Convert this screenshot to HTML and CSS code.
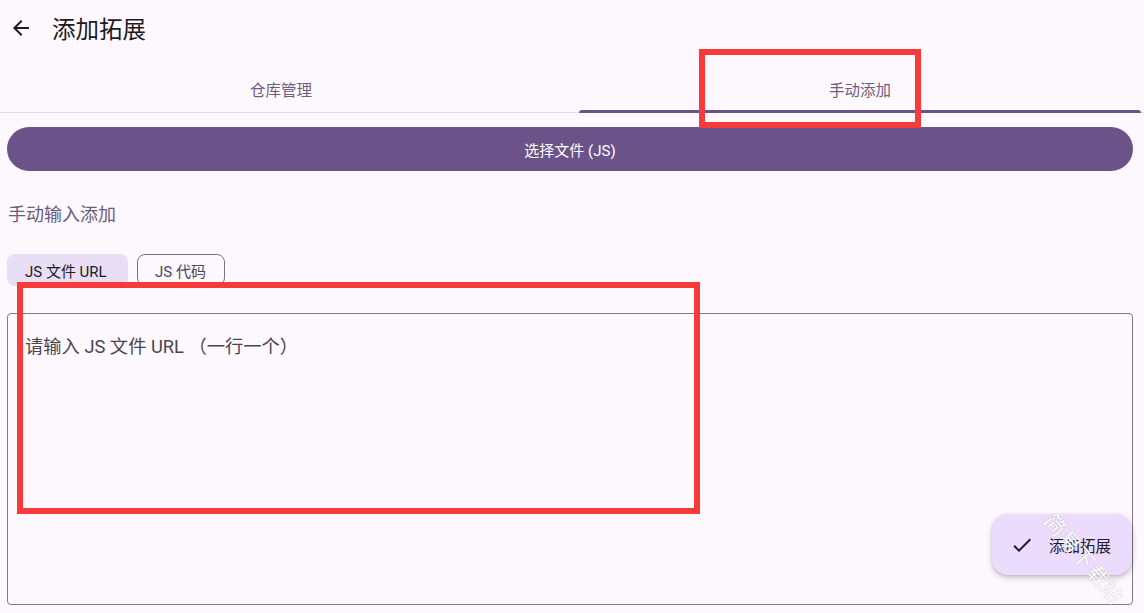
FILE: index.html
```html
<!DOCTYPE html>
<html lang="zh-CN">
<head>
    <meta charset="UTF-8">
    <meta name="viewport" content="width=device-width, initial-scale=1.0">
    <title>添加拓展</title>
    <link rel="stylesheet" href="styles.css">
</head>
<body>

    <!-- Top bar -->
    <div class="topbar">
        <svg class="back" width="24" height="24" viewBox="0 0 24 24">
            <path d="M20 11H7.83l5.59-5.59L12 4l-8 8 8 8 1.41-1.41L7.83 13H20v-2z" fill="#1d1b20"/>
        </svg>
        <h1>添加拓展</h1>
    </div>

    <!-- Tabs -->
    <div class="tabs">
        <div class="tab">仓库管理</div>
        <div class="tab active">手动添加</div>
    </div>

    <!-- Content -->
    <div class="content">
        <button class="pick">选择文件 (JS)</button>

        <div class="label">手动输入添加</div>

        <div class="chips">
            <span class="chip selected">JS 文件 URL</span>
            <span class="chip">JS 代码</span>
        </div>

        <div class="field">
            <span class="placeholder">请输入 JS 文件 URL （一行一个）</span>
        </div>
    </div>

    <!-- Floating action -->
    <div class="fab">
        <svg width="24" height="24" viewBox="0 0 24 24">
            <path d="M9 16.17L4.83 12l-1.42 1.41L9 19 21 7l-1.41-1.41z" fill="#21182b"/>
        </svg>
        <span>添加拓展</span>
    </div>
    <div class="watermark">简易下载站</div>

    <!-- Annotation boxes -->
    <div class="mark mark-tab"></div>
    <div class="mark mark-field"></div>

</body>
</html>
```

FILE: styles.css
```css
/* General */
body {
    margin: 0;
    width: 1144px;
    height: 613px;
    overflow: hidden;
    background: #fdf7fe;
    font-family: Roboto, "Noto Sans CJK SC", sans-serif;
    color: #1d1b20;
    position: relative;
}

/* Top bar */
.topbar {
    height: 56px;
    display: flex;
    align-items: center;
}

.topbar .back {
    margin-left: 9px;
}

.topbar h1 {
    margin: 0 0 0 19px;
    font-size: 23.5px;
    font-weight: 400;
}

/* Tabs */
.tabs {
    margin-top: 9px;
    height: 48px;
    display: grid;
    grid-template-columns: 578px 566px;
    border-bottom: 1px solid #e4dde8;
    box-sizing: border-box;
}

.tab {
    display: flex;
    align-items: center;
    justify-content: center;
    font-size: 15.5px;
    color: #6b5f80;
    position: relative;
}

.tab:first-child {
    margin-right: 16px;
}

.tab.active {
    margin-left: 1px;
    margin-right: 3px;
}

.tab.active::after {
    content: "";
    position: absolute;
    left: 0;
    right: 0;
    bottom: -1px;
    height: 3px;
    background: #6b5289;
    border-radius: 3px 3px 0 0;
}

/* Content */
.content {
    padding: 14px 11px 0 7px;
}

.pick {
    width: 100%;
    height: 44px;
    border: none;
    border-radius: 22px;
    background: #6b5289;
    color: #fff;
    font-family: inherit;
    font-size: 15px;
    font-weight: 400;
    display: block;
}

.label {
    margin: 34px 0 0 1px;
    font-size: 18px;
    line-height: 20px;
    color: #6b5d7b;
}

.chips {
    margin-top: 29px;
    display: flex;
    gap: 9px;
}

.chip {
    height: 32px;
    box-sizing: border-box;
    padding: 0 18px 0 17px;
    border: 1px solid #79747e;
    border-radius: 8px;
    display: flex;
    align-items: center;
    font-size: 15px;
    font-weight: 400;
    color: #4a4458;
}

.chip.selected {
    width: 121px;
    border-color: transparent;
    background: #e8def6;
    color: #1d1b20;
}

.field {
    margin-top: 27px;
    height: 292px;
    border: 1px solid #807a86;
    border-radius: 4px;
    box-sizing: border-box;
    padding: 18px 17px;
}

.placeholder {
    font-size: 18.3px;
    color: #49454f;
}

/* Floating action button */
.fab {
    position: absolute;
    left: 992px;
    top: 514px;
    width: 140px;
    height: 61px;
    box-sizing: border-box;
    padding-left: 18px;
    border-radius: 16px;
    background: #ebdcfd;
    box-shadow: 0 3px 6px rgba(0, 0, 0, 0.18), 0 1px 3px rgba(0, 0, 0, 0.12);
    display: flex;
    align-items: center;
    gap: 15px;
    font-size: 15.5px;
    font-weight: 400;
    color: #21182b;
}

.watermark {
    position: absolute;
    left: 1030px;
    top: 543px;
    font-size: 21px;
    letter-spacing: 1px;
    color: #fff;
    text-shadow: 0 0 1px rgba(90, 80, 100, 0.5);
    transform: rotate(50deg);
}

/* Annotation boxes */
.mark {
    position: absolute;
    border: 6px solid #f73a3a;
    box-sizing: border-box;
}

.mark-tab {
    left: 699px;
    top: 49px;
    width: 222px;
    height: 79px;
}

.mark-field {
    left: 17px;
    top: 282px;
    width: 683px;
    height: 232px;
}
```
